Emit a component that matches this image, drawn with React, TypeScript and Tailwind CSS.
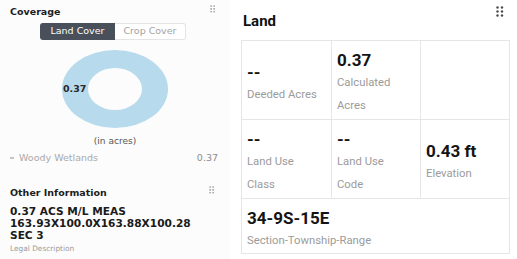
import React from "react";

const Grip = ({ dark }: { dark?: boolean }) => {
  const color = dark ? "#4b4b4b" : "#8a8a8a";
  const size = dark ? 2.4 : 1.6;
  const gap = dark ? 4.5 : 3;
  return (
    <svg width={dark ? 9 : 6} height={dark ? 12 : 8} viewBox={`0 0 ${dark ? 9 : 6} ${dark ? 12 : 8}`}>
      {[0, 1, 2].map((r) =>
        [0, 1].map((c) => (
          <rect
            key={`${r}-${c}`}
            x={c * gap + 0.3}
            y={r * (dark ? 4 : 2.8) + 0.3}
            width={size}
            height={size}
            rx={size / 2}
            fill={color}
          />
        ))
      )}
    </svg>
  );
};

const Cell = ({
  value,
  label,
  span,
}: {
  value?: string;
  label?: string[];
  span?: boolean;
}) => (
  <div
    className={`flex flex-col justify-center border-r border-b border-[#e6e6e6] pl-[5px] pt-[6px] ${
      span ? "col-span-3" : ""
    }`}
  >
    {value && (
      <div className="text-[17px] font-bold leading-[22px] text-[#141414]">{value}</div>
    )}
    {label &&
      label.map((l) => (
        <div key={l} className="text-[11.3px] leading-[23px] text-[#9b9b9b]">
          {l}
        </div>
      ))}
  </div>
);

export default function App() {
  return (
    <div className="flex h-[259px] w-[517px] overflow-hidden bg-white">
      {/* Left column */}
      <div
        className="flex w-[230px] flex-col bg-[#fcfcfc]"
        style={{ fontFamily: "'DejaVu Sans', Verdana, sans-serif" }}
      >
        <div className="flex items-start justify-between pl-[10px] pr-[14px] pt-[5px]">
          <div className="text-[9.5px] font-bold leading-[13px] text-[#1c1c1c]">Coverage</div>
          <div className="pt-[0px]">
            <Grip />
          </div>
        </div>

        <div className="ml-[40px] mt-[5px] flex h-[17px] w-[146px] text-[9.5px]">
          <div className="flex w-[75px] items-center justify-center rounded-l-[3px] bg-[#4a505b] text-white">
            Land Cover
          </div>
          <div className="flex w-[71px] items-center justify-center rounded-r-[3px] border border-l-0 border-[#e4e4e4] bg-white text-[#a2a2a2]">
            Crop Cover
          </div>
        </div>

        <svg width="230" height="90" viewBox="0 0 230 90" className="mt-[4px]">
          <path
            fillRule="evenodd"
            fill="#b7dbed"
            d="M62 45 a53 39 0 1 0 106 0 a53 39 0 1 0 -106 0 Z M88 45 a27 21 0 1 0 54 0 a27 21 0 1 0 -54 0 Z"
          />
          <text
            x="63"
            y="48"
            fontSize="9.5"
            fontWeight="bold"
            fill="#2a2a2a"
            fontFamily="'DejaVu Sans', sans-serif"
          >
            0.37
          </text>
        </svg>

        <div className="mt-[1px] text-center text-[9px] leading-[12px] text-[#555]">(in acres)</div>

        <div className="mt-[5px] flex items-center justify-between pl-[10px] pr-[12px] text-[9.5px] leading-[12px] text-[#a9a9a9]">
          <div className="flex items-center gap-[5px]">
            <span className="h-[2px] w-[4px] bg-[#c4c4c4]" />
            <span>Woody Wetlands</span>
          </div>
          <span className="text-[#8c8c8c]">0.37</span>
        </div>

        <div className="mt-[22px] flex items-start justify-between pl-[10px] pr-[15px]">
          <div className="text-[9.5px] font-bold leading-[13px] text-[#1c1c1c]">Other Information</div>
          <div className="pt-[0px]">
            <Grip />
          </div>
        </div>

        <div className="mt-[6px] pl-[10px] text-[10.6px] font-bold leading-[12px] text-[#1a1a1a]">
          <div>0.37 ACS M/L MEAS</div>
          <div>163.93X100.0X163.88X100.28</div>
          <div>SEC 3</div>
        </div>
        <div className="mt-[3px] pl-[10px] text-[7.4px] leading-[10px] text-[#9a9a9a]">Legal Description</div>
      </div>

      {/* Right column */}
      <div
        className="relative flex-1 bg-white pl-[11px]"
        style={{ fontFamily: "Roboto, 'Noto Sans', sans-serif" }}
      >
        <div className="absolute right-[12px] top-[6px]">
          <Grip dark />
        </div>
        <div className="pl-[2px] pt-[11px] text-[15px] font-bold leading-[20px] text-[#111]">Land</div>
        <div className="mt-[9px] grid w-[269px] grid-cols-[90px_89px_89px] grid-rows-[79px_79px_55px] border-l border-t border-[#e6e6e6]">
          <Cell value="--" label={["Deeded Acres"]} />
          <Cell value="0.37" label={["Calculated", "Acres"]} />
          <Cell />
          <Cell value="--" label={["Land Use", "Class"]} />
          <Cell value="--" label={["Land Use", "Code"]} />
          <Cell value="0.43 ft" label={["Elevation"]} />
          <Cell value="34-9S-15E" label={["Section-Township-Range"]} span />
        </div>
      </div>
    </div>
  );
}
